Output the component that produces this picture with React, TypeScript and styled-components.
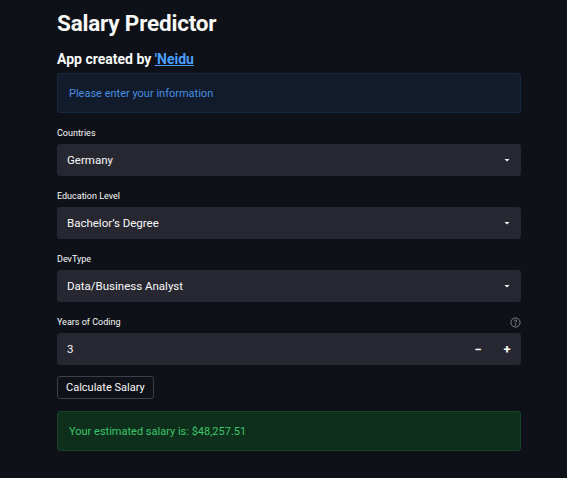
import React from "react";
import styled, { createGlobalStyle } from "styled-components";

const Global = createGlobalStyle`
  html, body { margin: 0; padding: 0; background: #0e1117; }
  body { font-family: Roboto, "Liberation Sans", sans-serif; color: #fafafa; }
`;

const Page = styled.div`
  width: 567px;
  height: 478px;
  background: #0e1117;
  overflow: hidden;
`;

const Main = styled.main`
  width: 464px;
  margin-left: 57px;
  display: flex;
  flex-direction: column;
`;

const Title = styled.h1`
  margin: 8px 0 0 0;
  font-size: 22.5px;
  line-height: 30px;
  font-weight: 700;
  letter-spacing: -0.2px;
  color: #fafafa;
`;

const Subtitle = styled.h3`
  margin: 12px 0 0 0;
  font-size: 14px;
  line-height: 18px;
  font-weight: 700;
  color: #fafafa;
  a { color: #4a9eff; text-decoration: underline; }
`;

const Alert = styled.div<{ $kind: "info" | "success"; $gap: number }>`
  margin-top: ${(p) => p.$gap}px;
  height: 40px;
  box-sizing: border-box;
  display: flex;
  align-items: center;
  padding: 0 11px;
  border-radius: 3px;
  font-size: 11px;
  background: ${(p) => (p.$kind === "info" ? "#111b2b" : "#0e2f1c")};
  border: 1px solid ${(p) => (p.$kind === "info" ? "#1a2a3e" : "#16432a")};
  color: ${(p) => (p.$kind === "info" ? "#4a8fe0" : "#3dc56a")};
`;

const Field = styled.div`
  display: flex;
  flex-direction: column;
  margin-top: 12px;
`;

const LabelRow = styled.div`
  display: flex;
  justify-content: space-between;
  align-items: center;
  height: 16px;
  margin-bottom: 3px;
`;

const Label = styled.label`
  font-size: 9px;
  color: #fafafa;
`;

const Box = styled.div<{ $number?: boolean }>`
  height: 32px;
  box-sizing: border-box;
  background: #262730;
  border-radius: 3px;
  display: flex;
  align-items: center;
  padding: 0 ${(p) => (p.$number ? 0 : 10)}px 0 10px;
  font-size: 11.5px;
  color: #fafafa;
`;

const Value = styled.span`
  flex: 1;
`;

const Step = styled.span<{ $w: number }>`
  width: ${(p) => p.$w}px;
  text-align: center;
  font-size: 13px;
  font-weight: 700;
`;

const Button = styled.button`
  align-self: flex-start;
  margin-top: 11px;
  height: 23px;
  padding: 0 8px;
  background: #0e1117;
  border: 1px solid #3c3f4a;
  border-radius: 3px;
  color: #fafafa;
  font-family: inherit;
  font-size: 11px;
`;

const Caret = () => (
  <svg width="8" height="8" viewBox="0 0 8 8">
    <path d="M1.5 3h5L4 5.5z" fill="#fafafa" />
  </svg>
);

const Help = () => (
  <svg width="11" height="11" viewBox="0 0 12 12" fill="none" stroke="#8b8d95" strokeWidth="1">
    <circle cx="6" cy="6" r="5" />
    <path d="M4.6 4.6a1.4 1.4 0 1 1 2 1.3c-.4.2-.6.5-.6.9v.3" />
    <circle cx="6" cy="8.6" r=".4" fill="#8b8d95" />
  </svg>
);

const Select = ({ label, value }: { label: string; value: string }) => (
  <Field>
    <LabelRow>
      <Label>{label}</Label>
    </LabelRow>
    <Box>
      <Value>{value}</Value>
      <Caret />
    </Box>
  </Field>
);

export default function App() {
  return (
    <Page>
      <Global />
      <Main>
        <Title>Salary Predictor</Title>
        <Subtitle>
          App created by <a href="#">'Neidu</a>
        </Subtitle>
        <Alert $kind="info" $gap={5}>Please enter your information</Alert>
        <Select label="Countries" value="Germany" />
        <Select label="Education Level" value="Bachelor’s Degree" />
        <Select label="DevType" value="Data/Business Analyst" />
        <Field>
          <LabelRow>
            <Label>Years of Coding</Label>
            <Help />
          </LabelRow>
          <Box $number>
            <Value>3</Value>
            <Step $w={30}>−</Step>
            <Step $w={28}>+</Step>
          </Box>
        </Field>
        <Button>Calculate Salary</Button>
        <Alert $kind="success" $gap={12}>Your estimated salary is: $48,257.51</Alert>
      </Main>
    </Page>
  );
}
